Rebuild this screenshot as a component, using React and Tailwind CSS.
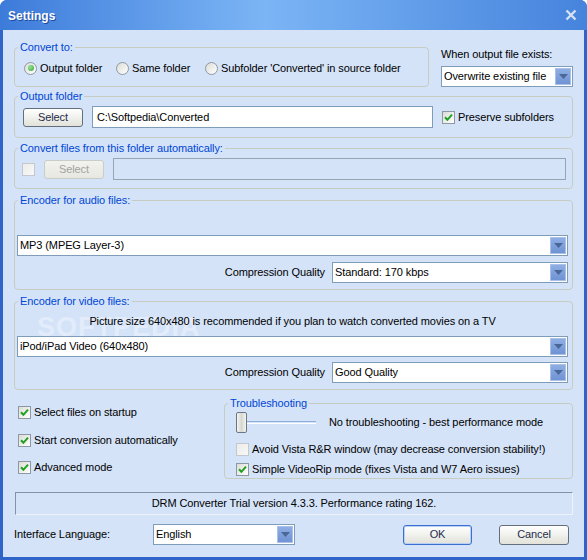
import React from 'react';

const Group = ({ title, className = '', children }) => (
  <fieldset className={`min-w-0 rounded-[4px] border border-[#c7ccc0] p-0 ${className}`}>
    <legend className="ml-[3px] px-[2px] leading-[14px] text-[#0046d5]">{title}</legend>
    {children}
  </fieldset>
);

const Arrow = () => (
  <span className="m-[1px] flex w-[16px] items-center justify-center border border-[#a9c1ea] bg-gradient-to-b from-[#8eaee4] to-[#6f93d3]">
    <svg width="9" height="5" viewBox="0 0 9 5">
      <path d="M0 0h9L4.5 5z" fill="#4a6797" />
    </svg>
  </span>
);

const Combo = ({ value, className = '' }) => (
  <div className={`flex h-[21px] items-stretch border border-[#7f9db9] bg-white ${className}`}>
    <span className="flex-1 truncate pl-[2px] leading-[19px]">{value}</span>
    <Arrow />
  </div>
);

const Check = ({ checked, disabled }) => (
  <span
    className={`flex h-[13px] w-[13px] shrink-0 items-center justify-center border bg-gradient-to-br ${
      disabled ? 'border-[#c2c8ce] from-[#ececea] to-[#f8f8f6]' : 'border-[#8e98a4] from-[#dcdcd6] to-white'
    }`}
  >
    {checked && (
      <svg width="9" height="9" viewBox="0 0 9 9">
        <path d="M1 4.2l2.4 2.6L8 1.6" stroke="#21a121" strokeWidth="2" fill="none" />
      </svg>
    )}
  </span>
);

const Radio = ({ checked }) => (
  <span className="flex h-[13px] w-[13px] shrink-0 items-center justify-center rounded-full border border-[#8e98a4] bg-gradient-to-br from-[#dcdcd6] to-white">
    {checked && <span className="h-[6px] w-[6px] rounded-full bg-[radial-gradient(circle_at_35%_35%,#9be39b,#2ca52c)]" />}
  </span>
);

const Btn = ({ children, className = '', primary, disabled }) => (
  <div
    className={`flex items-center justify-center rounded-[3px] border bg-gradient-to-b ${
      disabled
        ? 'border-[#c9cdc8] from-[#f2f2ee] to-[#e8e8e2] text-[#a3a3a0]'
        : primary
        ? 'border-[#3b6fd0] from-white to-[#e2e2da] text-[#1e2e4a] shadow-[inset_0_0_0_1px_#b8d0f4]'
        : 'border-[#646f7e] from-white to-[#e2e2da] text-[#1e2e4a]'
    } ${className}`}
  >
    {children}
  </div>
);

const CheckRow = ({ checked, disabled, label, className = '' }) => (
  <div className={`flex h-[16px] items-center gap-[3px] ${className}`}>
    <Check checked={checked} disabled={disabled} />
    <span>{label}</span>
  </div>
);

export default function App() {
  return (
    <div className="flex h-[560px] w-[587px] flex-col overflow-hidden rounded-t-[7px] bg-[#2f64c8] font-['Liberation_Sans',Arial,sans-serif] text-[11px] tracking-[-0.1px] text-black">
      <div className="flex h-[30px] shrink-0 items-center justify-between bg-gradient-to-r from-[#3d7bda] via-[#7cb5f5] via-45% to-[#4683dc] pl-[8px] pr-[10px]">
        <span className="mt-[2px] text-[12px] font-bold tracking-normal text-white [text-shadow:1px_1px_0_#1d4b9e]">Settings</span>
        <svg width="12" height="12" viewBox="0 0 12 12">
          <path d="M1.5 1.5l9 9M10.5 1.5l-9 9" stroke="#d4e2f4" strokeWidth="2.4" />
        </svg>
      </div>

      <div className="mx-[3px] mb-[3px] flex flex-1 flex-col bg-[#d4e3f8] px-[11px] pt-[10px]">
        {/* row 1 */}
        <div className="flex">
          <Group title="Convert to:" className="w-[415px]">
            <div className="mb-[9px] mt-[6px] flex h-[16px] items-center pl-[9px]">
              <div className="flex w-[92px] items-center gap-[3px]">
                <Radio checked />
                <span>Output folder</span>
              </div>
              <div className="flex w-[89px] items-center gap-[3px]">
                <Radio />
                <span>Same folder</span>
              </div>
              <div className="flex items-center gap-[3px]">
                <Radio />
                <span>Subfolder 'Converted' in source folder</span>
              </div>
            </div>
          </Group>
          <div className="ml-[12px] flex flex-1 flex-col">
            <span className="mt-[7px] leading-[14px]">When output file exists:</span>
            <Combo value="Overwrite existing file" className="mt-[5px]" />
          </div>
        </div>

        <Group title="Output folder" className="mt-[2px]">
          <div className="mb-[9px] mt-[3px] flex h-[22px] items-center pl-[8px]">
            <Btn className="h-[19px] w-[60px]">Select</Btn>
            <div className="ml-[9px] h-[22px] w-[341px] border border-[#7f9db9] bg-white pl-[4px] leading-[20px]">
              C:\Softpedia\Converted
            </div>
            <CheckRow checked label="Preserve subfolders" className="ml-[9px]" />
          </div>
        </Group>

        <Group title="Convert files from this folder automatically:" className="mt-[3px]">
          <div className="mb-[8px] mt-[3px] flex h-[22px] items-center pl-[7px] pr-[6px]">
            <Check disabled />
            <Btn disabled className="ml-[9px] h-[19px] w-[60px]">
              Select
            </Btn>
            <div className="ml-[9px] h-[22px] flex-1 border border-[#98a4b2]" />
          </div>
        </Group>

        <Group title="Encoder for audio files:" className="mt-[4px]">
          <div className="mb-[6px] mt-[28px] flex flex-col pl-[2px] pr-[4px]">
            <Combo value="MP3 (MPEG Layer-3)" />
            <div className="mt-[6px] flex items-center justify-end">
              <span>Compression Quality</span>
              <Combo value="Standard: 170 kbps" className="ml-[7px] w-[236px]" />
            </div>
          </div>
        </Group>

        <Group title="Encoder for video files:" className="relative mt-[4px]">
          <div className="pointer-events-none absolute left-[22px] top-[6px] flex flex-col items-start leading-none text-white/35">
            <span className="text-[27px] font-bold tracking-[1px]">SOFTPEDIA</span>
            <span className="ml-[40px] text-[8px]">www.softpedia.com</span>
          </div>
          <div className="relative mb-[6px] mt-[6px] flex flex-col pl-[2px] pr-[4px]">
            <span className="text-center leading-[14px]">
              Picture size 640x480 is recommended if you plan to watch converted movies on a TV
            </span>
            <Combo value="iPod/iPad Video (640x480)" className="mt-[8px]" />
            <div className="mt-[5px] flex items-center justify-end">
              <span>Compression Quality</span>
              <Combo value="Good Quality" className="ml-[7px] w-[236px]" />
            </div>
          </div>
        </Group>

        {/* bottom options */}
        <div className="mt-[6px] flex">
          <div className="flex w-[210px] flex-col pl-[4px] pt-[8px]">
            <CheckRow checked label="Select files on startup" />
            <CheckRow checked label="Start conversion automatically" className="mt-[12px]" />
            <CheckRow checked label="Advanced mode" className="mt-[11px]" />
          </div>
          <Group title="Troubleshooting" className="flex-1">
            <div className="mb-[1px] mt-[2px] flex flex-col pl-[11px]">
              <div className="flex h-[21px] items-center">
                <div className="h-[21px] w-[11px] rounded-[2px] border border-[#6d7784] bg-gradient-to-r from-[#f4f4f0] via-[#d8d8d2] to-[#f4f4f0]" />
                <div className="h-[3px] w-[69px] border-t border-[#8eaedb] border-b border-b-white" />
                <span className="ml-[13px]">No troubleshooting - best performance mode</span>
              </div>
              <CheckRow disabled label="Avoid Vista R&R window (may decrease conversion stability!)" className="mt-[8px]" />
              <CheckRow checked label="Simple VideoRip mode (fixes Vista and W7 Aero issues)" className="mt-[4px]" />
            </div>
          </Group>
        </div>

        <div className="ml-[1px] mt-[13px] flex h-[23px] items-center justify-center border border-[#8293a8] border-b-[#eef3fa] border-r-[#eef3fa]">
          DRM Converter Trial version 4.3.3. Performance rating 162.
        </div>

        <div className="mt-[9px] flex h-[21px] items-center">
          <span className="w-[139px]">Interface Language:</span>
          <Combo value="English" className="w-[142px]" />
          <Btn primary className="ml-[108px] h-[20px] w-[69px]">
            OK
          </Btn>
          <Btn className="ml-[27px] h-[20px] w-[70px]">Cancel</Btn>
        </div>
      </div>
    </div>
  );
}
